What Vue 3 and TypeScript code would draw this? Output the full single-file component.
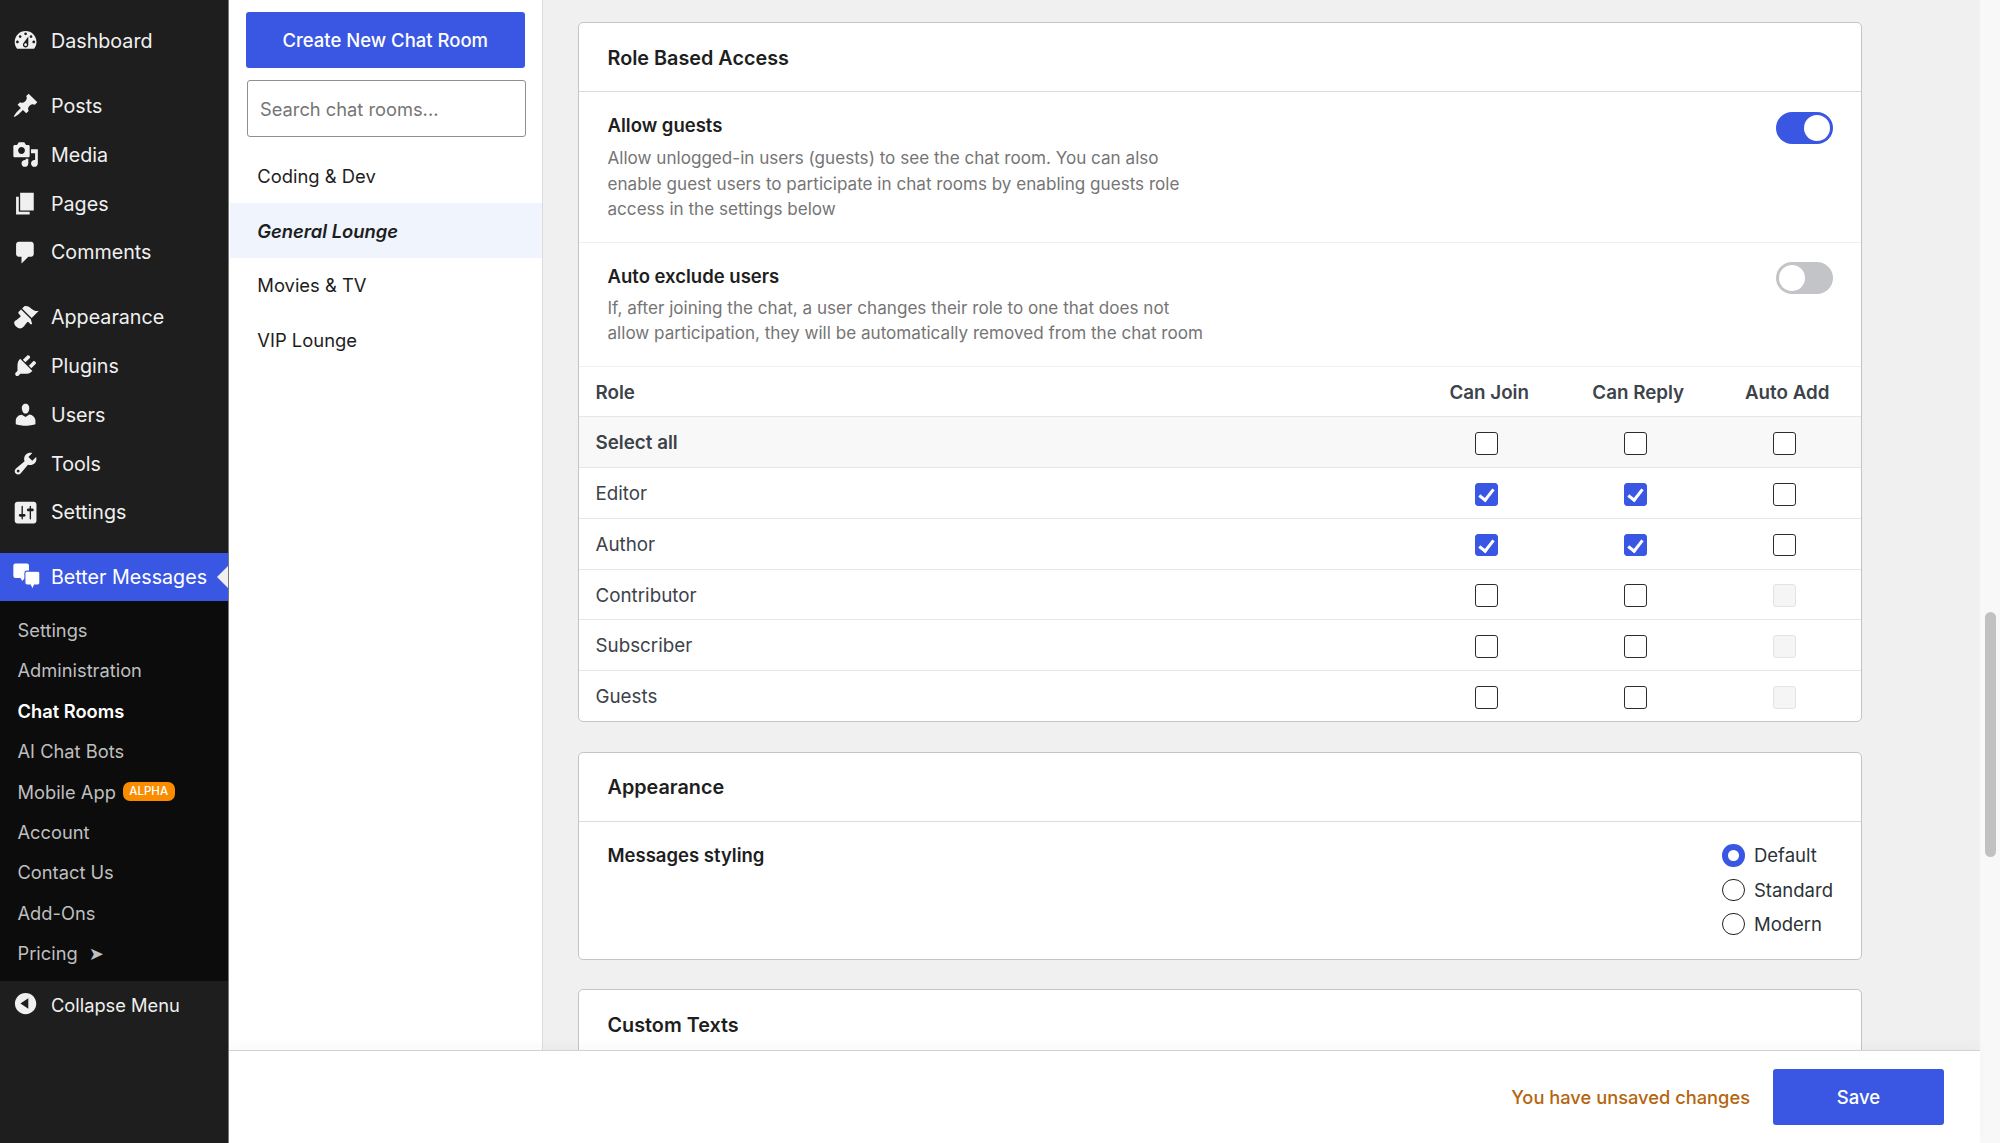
<script setup lang="ts">
import { ref } from 'vue'

interface NavItem {
  label: string
  icon: string
  gapAfter?: boolean
}

interface RoleRow {
  name: string
  join: boolean
  reply: boolean
  add: boolean
  addDisabled?: boolean
  strong?: boolean
}

const navItems: NavItem[] = [
  {
    label: 'Dashboard',
    gapAfter: true,
    icon: 'M3.76 16h12.48c1.1-1.37 1.76-3.11 1.76-5 0-4.42-3.58-8-8-8s-8 3.58-8 8c0 1.89.66 3.63 1.76 5zM10 4c.55 0 1 .45 1 1s-.45 1-1 1-1-.45-1-1 .45-1 1-1zM6 6c.55 0 1 .45 1 1s-.45 1-1 1-1-.45-1-1 .45-1 1-1zm8 0c.55 0 1 .45 1 1s-.45 1-1 1-1-.45-1-1 .45-1 1-1zm-5.37 5.55L12 7v6c0 1.1-.9 2-2 2s-2-.9-2-2c0-.57.24-1.08.63-1.45zM4 10c.55 0 1 .45 1 1s-.45 1-1 1-1-.45-1-1 .45-1 1-1zm12 0c.55 0 1 .45 1 1s-.45 1-1 1-1-.45-1-1 .45-1 1-1zm-5 3c0-.55-.45-1-1-1s-1 .45-1 1 .45 1 1 1 1-.45 1-1z',
  },
  {
    label: 'Posts',
    icon: 'M10.44 3.02l1.82-1.82 6.36 6.35-1.83 1.82c-1.05-.68-2.48-.57-3.41.36l-.75.75c-.92.93-1.04 2.35-.35 3.41l-1.83 1.82-2.41-2.41-2.8 2.79c-.42.42-3.38 2.71-3.8 2.29s1.86-3.39 2.28-3.81l2.79-2.79L4.1 9.36l1.83-1.82c1.05.69 2.48.57 3.4-.36l.75-.75c.93-.92 1.05-2.35.36-3.41z',
  },
  {
    label: 'Media',
    icon: 'M13 11V4c0-.55-.45-1-1-1h-1.67L9 1H5L3.67 3H2c-.55 0-1 .45-1 1v7c0 .55.45 1 1 1h10c.55 0 1-.45 1-1zM7 4.5c1.38 0 2.5 1.12 2.5 2.5S8.38 9.5 7 9.5 4.5 8.38 4.5 7 5.62 4.5 7 4.5zM14 6h5v10.5c0 1.38-1.12 2.5-2.5 2.5S14 17.88 14 16.5s1.12-2.5 2.5-2.5c.17 0 .34.02.5.05V9h-3V6zm-4 8.05V13h2v3.5c0 1.38-1.12 2.5-2.5 2.5S7 17.88 7 16.5 8.12 14 9.5 14c.17 0 .34.02.5.05z',
  },
  {
    label: 'Pages',
    icon: 'M6 15V2h10v13H6zm-1 1h8v2H3V5h2v11z',
  },
  {
    label: 'Comments',
    gapAfter: true,
    icon: 'M5 2h9c1.1 0 2 .9 2 2v7c0 1.1-.9 2-2 2h-2l-5 5v-5H5c-1.1 0-2-.9-2-2V4c0-1.1.9-2 2-2z',
  },
  {
    label: 'Appearance',
    icon: 'M14.48 11.06L7.41 3.99l1.5-1.5c.5-.56 2.3-.47 3.51.32 1.21.8 1.43 1.28 2.91 2.1 1.18.64 2.45 1.26 4.45.85zm-.71.71L6.7 4.7 4.93 6.47c-.39.39-.39 1.02 0 1.41l1.06 1.06c.39.39.39 1.03 0 1.42-.6.6-1.43 1.11-2.21 1.69-.35.26-.7.53-1.01.84C1.43 13.23.99 15.3 3 17.3c2 2 4.07 1.57 5.42.22.31-.31.58-.66.84-1.01.58-.78 1.09-1.61 1.69-2.21.39-.39 1.02-.39 1.41 0l1.06 1.06c.39.39 1.02.39 1.41 0z',
  },
  {
    label: 'Plugins',
    icon: 'M13.11 4.36L9.87 7.6 8 5.73l3.24-3.24c.35-.34 1.05-.2 1.56.32.52.51.66 1.21.31 1.55zm-8 1.77l.91-1.12 9.01 9.01-1.19.84c-.71.71-2.63 1.16-3.82 1.16H6.14L4.9 17.26c-.59.59-1.54.59-2.12 0-.59-.58-.59-1.53 0-2.12l1.24-1.24v-3.88c0-1.13.4-3.19 1.09-3.89zm7.26 3.97l3.24-3.24c.34-.35 1.04-.21 1.55.31.52.51.66 1.21.31 1.55l-3.24 3.25z',
  },
  {
    label: 'Users',
    icon: 'M10 9.25c-2.27 0-2.73-3.44-2.73-3.44C7 4.02 7.82 2 9.97 2c2.16 0 2.98 2.02 2.71 3.81 0 0-.41 3.44-2.68 3.44zm0 2.57L12.72 10c2.39 0 4.52 2.33 4.52 4.53v2.49s-3.65 1.13-7.24 1.13c-3.65 0-7.24-1.13-7.24-1.13v-2.49c0-2.25 1.94-4.48 4.47-4.48z',
  },
  {
    label: 'Tools',
    icon: 'M16.68 9.77c-1.34 1.34-3.3 1.67-4.95.99l-5.41 6.52c-.99.99-2.59.99-3.58 0s-.99-2.59 0-3.57l6.52-5.42c-.68-1.65-.35-3.61.99-4.95 1.28-1.28 3.12-1.62 4.72-1.06l-2.89 2.89 2.82 2.82 2.86-2.87c.53 1.58.18 3.39-1.08 4.65zM3.81 16.21c.4.39 1.04.39 1.43 0 .4-.4.4-1.04 0-1.43-.39-.4-1.03-.4-1.43 0-.39.39-.39 1.03 0 1.43z',
  },
  {
    label: 'Settings',
    gapAfter: true,
    icon: 'M18 16V4c0-1.1-.9-2-2-2H4c-1.1 0-2 .9-2 2v12c0 1.1.9 2 2 2h12c1.1 0 2-.9 2-2zM8 11h1c.55 0 1 .45 1 1s-.45 1-1 1H8v1.5c0 .28-.22.5-.5.5s-.5-.22-.5-.5V13H6c-.55 0-1-.45-1-1s.45-1 1-1h1V5.5c0-.28.22-.5.5-.5s.5.22.5.5V11zm5-2h-1c-.55 0-1-.45-1-1s.45-1 1-1h1V5.5c0-.28.22-.5.5-.5s.5.22.5.5V7h1c.55 0 1 .45 1 1s-.45 1-1 1h-1v5.5c0 .28-.22.5-.5.5s-.5-.22-.5-.5V9z',
  },
]

const subItems = ['Settings', 'Administration', 'Chat Rooms', 'AI Chat Bots', 'Mobile App', 'Account', 'Contact Us', 'Add-Ons', 'Pricing']

const rooms = ['Coding & Dev', 'General Lounge', 'Movies & TV', 'VIP Lounge']
const activeRoom = ref('General Lounge')

const allowGuests = ref(true)
const autoExclude = ref(false)
const styling = ref('Default')
const stylingOptions = ['Default', 'Standard', 'Modern']

const roles = ref<RoleRow[]>([
  { name: 'Select all', join: false, reply: false, add: false, strong: true },
  { name: 'Editor', join: true, reply: true, add: false },
  { name: 'Author', join: true, reply: true, add: false },
  { name: 'Contributor', join: false, reply: false, add: false, addDisabled: true },
  { name: 'Subscriber', join: false, reply: false, add: false, addDisabled: true },
  { name: 'Guests', join: false, reply: false, add: false, addDisabled: true },
])
</script>

<template>
  <div class="admin">
    <aside class="sidebar">
      <nav class="nav">
        <a
          v-for="item in navItems"
          :key="item.label"
          class="nav-item"
          :class="{ 'gap-after': item.gapAfter }"
        >
          <svg class="nav-icon" viewBox="0 0 20 20"><path :d="item.icon" fill-rule="evenodd" /></svg>
          <span class="nav-label">{{ item.label }}</span>
        </a>
        <a class="nav-item active">
          <svg class="nav-icon" viewBox="0 0 20 20">
            <path d="M2.5.3H11a1.5 1.5 0 0 1 1.5 1.5v7.7a1.5 1.5 0 0 1-1.5 1.5H9.5l-2 2.2-1.2-2.2H2.5A1.5 1.5 0 0 1 1 9.5V1.8A1.5 1.5 0 0 1 2.5.3z" />
            <path class="front-bubble" d="M11 6h8a1.5 1.5 0 0 1 1.5 1.5v7.2a1.5 1.5 0 0 1-1.5 1.5h-2.5L15 19.4l-1.5-3.2H11a1.5 1.5 0 0 1-1.5-1.5V7.5A1.5 1.5 0 0 1 11 6z" />
          </svg>
          <span class="nav-label">Better Messages</span>
          <i class="notch"></i>
        </a>
      </nav>
      <ul class="submenu">
        <li v-for="sub in subItems" :key="sub" :class="{ current: sub === 'Chat Rooms' }">
          {{ sub }}
          <span v-if="sub === 'Mobile App'" class="badge">ALPHA</span>
          <span v-if="sub === 'Pricing'" class="pricing-arrow">➤</span>
        </li>
      </ul>
      <a class="nav-item collapse">
        <svg class="nav-icon" viewBox="0 0 20 20">
          <path d="M10 2.16c4.33 0 7.84 3.51 7.84 7.84s-3.51 7.84-7.84 7.84S2.16 14.33 2.16 10 5.71 2.16 10 2.16zm2 11.72V6.12L6.18 9.97z" fill-rule="evenodd" />
        </svg>
        <span class="nav-label">Collapse Menu</span>
      </a>
    </aside>

    <div class="workspace">
      <div class="columns">
        <section class="rooms">
          <button class="primary create-btn">Create New Chat Room</button>
          <input class="search" type="text" placeholder="Search chat rooms..." />
          <ul class="room-list">
            <li v-for="room in rooms" :key="room" :class="{ selected: room === activeRoom }">{{ room }}</li>
          </ul>
        </section>

        <main class="settings">
          <div class="card">
            <h2 class="card-title">Role Based Access</h2>
            <div class="option">
              <div>
                <div class="option-title">Allow guests</div>
                <p class="option-desc">Allow unlogged-in users (guests) to see the chat room. You can also enable guest users to participate in chat rooms by enabling guests role access in the settings below</p>
              </div>
              <button class="toggle" :class="{ on: allowGuests }"><span class="knob"></span></button>
            </div>
            <div class="option tight">
              <div>
                <div class="option-title">Auto exclude users</div>
                <p class="option-desc">If, after joining the chat, a user changes their role to one that does not allow participation, they will be automatically removed from the chat room</p>
              </div>
              <button class="toggle" :class="{ on: autoExclude }"><span class="knob"></span></button>
            </div>
            <div class="role-table">
              <div class="role-row head">
                <div class="role-name">Role</div>
                <div class="role-col">Can Join</div>
                <div class="role-col">Can Reply</div>
                <div class="role-col">Auto Add</div>
              </div>
              <div v-for="role in roles" :key="role.name" class="role-row" :class="{ strong: role.strong }">
                <div class="role-name">{{ role.name }}</div>
                <div class="role-col"><input v-model="role.join" type="checkbox" /></div>
                <div class="role-col"><input v-model="role.reply" type="checkbox" /></div>
                <div class="role-col"><input v-model="role.add" type="checkbox" :disabled="role.addDisabled" /></div>
              </div>
            </div>
          </div>

          <div class="card">
            <h2 class="card-title">Appearance</h2>
            <div class="option radios-row">
              <div class="option-title styling-title">Messages styling</div>
              <div class="radio-group">
                <label v-for="opt in stylingOptions" :key="opt" class="radio">
                  <input v-model="styling" type="radio" :value="opt" />
                  <span>{{ opt }}</span>
                </label>
              </div>
            </div>
          </div>

          <div class="card">
            <h2 class="card-title">Custom Texts</h2>
          </div>
        </main>
      </div>

      <footer class="savebar">
        <span class="unsaved">You have unsaved changes</span>
        <button class="primary save-btn">Save</button>
      </footer>
    </div>

    <div class="scrolltrack"><div class="scrollthumb"></div></div>
  </div>
</template>

<style>
html,
body {
  margin: 0;
  overflow: hidden;
}
</style>

<style scoped>
.admin {
  display: flex;
  height: 100vh;
  font-family: Inter, "Liberation Sans", sans-serif;
  color: #3c434a;
  background: #f0f0f0;
}

.sidebar {
  width: 228px;
  flex-shrink: 0;
  background: #1e1e1e;
  border-right: 1px solid #77787a;
  padding-top: 16.6px;
  box-sizing: content-box;
}

.nav-item {
  position: relative;
  display: flex;
  align-items: center;
  height: 48.8px;
  padding-left: 12.3px;
  color: #f0f0f0;
  font-size: 19.7px;
  line-height: 1;
}

.nav-label {
  padding-top: 2px;
}

.nav-item.gap-after {
  margin-bottom: 16px;
}

.nav-item.active {
  background: #3a57e4;
  color: #fff;
}

.nav-icon {
  width: 27.2px;
  height: 27.2px;
  margin-right: 11.5px;
  fill: currentColor;
  flex-shrink: 0;
  overflow: visible;
}

.front-bubble {
  stroke: #3a57e4;
  stroke-width: 0.8;
}

.notch {
  position: absolute;
  right: 0;
  top: 13px;
  border: 11px solid transparent;
  border-left-width: 0;
  border-right-color: #f0f0f0;
  border-right-width: 11px;
}

.submenu {
  list-style: none;
  margin: 0;
  padding: 8.5px 0 7.5px;
  background: #0c0c0c;
}

.submenu li {
  display: flex;
  align-items: center;
  height: 40.4px;
  padding-left: 17.5px;
  color: #bfbfbf;
  font-size: 18.3px;
}

.submenu li.current {
  color: #fff;
  font-weight: 600;
}

.badge {
  margin-left: 7px;
  padding: 0 6.5px;
  height: 18.5px;
  line-height: 18.5px;
  border-radius: 7px;
  background: #fb8c00;
  color: #fff;
  font-size: 11.5px;
  font-weight: 500;
}

.pricing-arrow {
  margin-left: 11px;
  font-family: "DejaVu Sans", sans-serif;
  font-size: 18px;
}

.collapse {
  height: 46px;
  font-size: 18.3px;
}

.workspace {
  flex: 1;
  min-width: 0;
  display: flex;
  flex-direction: column;
}

.columns {
  flex: 1;
  min-height: 0;
  display: flex;
}

.rooms {
  flex-shrink: 0;
  background: #fff;
  border-right: 1.5px solid #dcdcde;
  padding: 11.7px 17px 0;
  box-sizing: border-box;
  width: 314px;
}

.primary {
  display: block;
  border: 0;
  border-radius: 3px;
  background: #3a57e4;
  color: #fff;
  font-family: inherit;
  font-size: 18.5px;
  font-weight: 500;
}

.create-btn {
  width: 278.5px;
  height: 56.5px;
}

.search {
  display: block;
  width: 278.5px;
  height: 57px;
  margin: 11.5px 0 0 1px;
  padding: 1px 12px 0;
  box-sizing: border-box;
  border: 1.5px solid #8c8f94;
  border-radius: 3px;
  font-family: inherit;
  font-size: 18.3px;
  color: #2c3338;
}

.search::placeholder {
  color: #757575;
}

.room-list {
  list-style: none;
  margin: 11.8px -17px 0 -16px;
  padding: 0;
}

.room-list li {
  display: flex;
  align-items: center;
  height: 54.7px;
  padding-left: 27.3px;
  color: #1e1e1e;
  font-size: 18.4px;
}

.room-list li.selected {
  background: #eff4fd;
  font-style: italic;
  font-weight: 600;
}

.settings {
  flex: 1;
  min-width: 0;
  overflow: hidden;
  padding: 22px 118px 0 34.5px;
}

.card {
  border: 1.5px solid #c3c4c7;
  border-radius: 5px;
  background: #fff;
  margin-bottom: 29.5px;
}

.card-title {
  display: flex;
  align-items: center;
  height: 69px;
  box-sizing: border-box;
  margin: 0;
  padding: 1px 29px 0;
  border-bottom: 1.5px solid #dcdcde;
  color: #1e1e1e;
  font-size: 19.8px;
  font-weight: 600;
}

.option {
  display: flex;
  justify-content: space-between;
  align-items: flex-start;
  padding: 21px 28px 20px 29px;
  border-bottom: 1.5px solid #efefef;
}

.option.tight .option-desc {
  margin-top: 6px;
}

.option-title {
  height: 25px;
  line-height: 25px;
  color: #1e1e1e;
  font-size: 18.5px;
  font-weight: 600;
}

.option-desc {
  width: 605px;
  margin: 7px 0 0;
  color: #757575;
  font-size: 17.1px;
  line-height: 25.6px;
}

.toggle {
  position: relative;
  width: 57px;
  height: 32px;
  margin-top: -1.5px;
  padding: 0;
  border: 0;
  border-radius: 16px;
  background: #c3c4c7;
}

.toggle.on {
  background: #3a57e4;
}

.knob {
  position: absolute;
  top: 3px;
  left: 3px;
  width: 26px;
  height: 26px;
  border-radius: 50%;
  background: #fff;
}

.toggle.on .knob {
  left: 28px;
}

.role-row {
  display: grid;
  grid-template-columns: 1fr 149px 149px 149px;
  align-items: center;
  height: 50.8px;
  box-sizing: border-box;
  padding-top: 1px;
  border-bottom: 1.5px solid #e6e6e6;
  font-size: 18.8px;
}

.role-row:last-child {
  border-bottom: 0;
  height: 50px;
}

.role-row.head {
  height: 50.3px;
  font-weight: 600;
}

.role-row.head .role-col {
  padding-left: 1.5px;
}

.role-row.strong {
  background: #f8f8f8;
  font-weight: 600;
}

.role-name {
  padding-left: 17px;
}

.role-col {
  display: flex;
  justify-content: center;
}

.role-col input {
  appearance: none;
  position: relative;
  width: 22.7px;
  height: 22.7px;
  margin: 1.5px 3.5px 0 0;
  border: 1.5px solid #2c2c2c;
  border-radius: 3px;
  background: #fff;
  box-sizing: border-box;
}

.role-col input:checked {
  border-color: #3a57e4;
  background: #3a57e4;
}

.role-col input:checked::before {
  content: "";
  position: absolute;
  left: 5.8px;
  top: 2px;
  width: 6px;
  height: 12px;
  border: solid #fff;
  border-width: 0 3px 3px 0;
  transform: rotate(38deg);
}

.role-col input:disabled {
  border-color: #e3e3e3;
  background: #f5f5f5;
}

.radios-row {
  padding: 16.5px 28px 17.2px 29px;
  border-bottom: 0;
}

.styling-title {
  margin-top: 4.5px;
}

.radio {
  display: flex;
  align-items: center;
  height: 34.4px;
  gap: 9px;
  color: #2c3338;
  font-size: 18.5px;
}

.radio input {
  appearance: none;
  width: 22.5px;
  height: 22.5px;
  margin: 0;
  border: 1.5px solid #222;
  border-radius: 50%;
  background: #fff;
  box-sizing: border-box;
}

.radio input:checked {
  border: 6px solid #3a57e4;
}

.savebar {
  flex-shrink: 0;
  height: 93px;
  box-sizing: border-box;
  display: flex;
  align-items: center;
  justify-content: flex-end;
  padding: 0 36px 0 0;
  gap: 23px;
  background: #fff;
  border-top: 1.5px solid #d3d3d3;
  box-shadow: 0 -6px 10px rgba(0, 0, 0, 0.025);
  position: relative;
}

.unsaved {
  color: #b5650e;
  font-size: 18.3px;
  font-weight: 500;
}

.save-btn {
  width: 171px;
  height: 56.5px;
}

.scrolltrack {
  width: 20px;
  flex-shrink: 0;
  box-sizing: border-box;
  background: #f8f8f8;
  padding: 611.7px 4px 0 5px;
}

.scrollthumb {
  height: 245px;
  border-radius: 6px;
  background: #c1c1c1;
}
</style>
